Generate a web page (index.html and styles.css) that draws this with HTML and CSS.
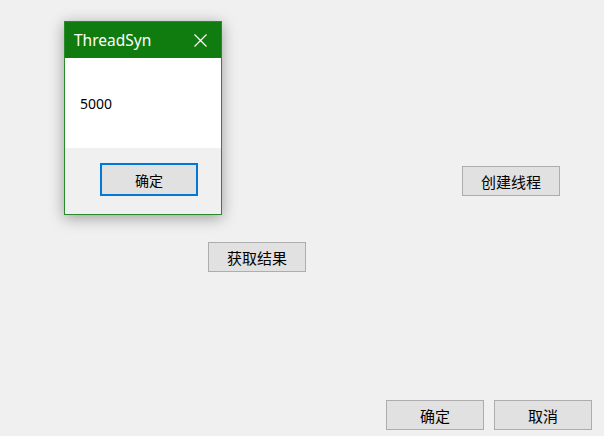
FILE: index.html
```html
<!DOCTYPE html>
<html lang="zh-CN">
<head>
  <meta charset="UTF-8">
  <title>ThreadSyn</title>
  <link rel="stylesheet" href="styles.css">
</head>
<body>
  <div class="form">
    <div class="row row-create">
      <button class="btn">创建线程</button>
    </div>
    <div class="row row-result">
      <button class="btn">获取结果</button>
    </div>
    <div class="footer">
      <button class="btn">确定</button>
      <button class="btn">取消</button>
    </div>
  </div>

  <div class="msgbox">
    <div class="msgbox-title">
      <span>ThreadSyn</span>
      <svg class="close" width="13" height="13" viewBox="0 0 13 13">
        <path d="M0.5 0.5 L12.5 12.5 M12.5 0.5 L0.5 12.5" stroke="#fff" stroke-width="1.2" fill="none"/>
      </svg>
    </div>
    <div class="msgbox-body">5000</div>
    <div class="msgbox-foot">
      <button class="btn btn-default">确定</button>
    </div>
  </div>
</body>
</html>
```

FILE: styles.css
```css
html, body {
  margin: 0;
  padding: 0;
}
body {
  width: 604px;
  height: 436px;
  background-color: #f0f0f0;
  font-family: "Noto Sans", "Noto Sans CJK SC", sans-serif;
  color: #000;
  position: relative;
  overflow: hidden;
}
.form {
  height: 436px;
  display: flex;
  flex-direction: column;
}
.row {
  display: flex;
}
.row-create {
  margin-top: 166px;
  padding-left: 462px;
}
.row-result {
  margin-top: 46px;
  padding-left: 208px;
}
.footer {
  margin-top: auto;
  display: flex;
  justify-content: flex-end;
  gap: 10px;
  padding: 0 12px 6px 0;
}
.btn {
  width: 98px;
  height: 30px;
  background-color: #e1e1e1;
  border: 1px solid #adadad;
  font-family: "Noto Sans CJK SC", sans-serif;
  font-size: 15px;
  color: #000;
  padding: 0;
  margin: 0;
}

.msgbox {
  position: absolute;
  left: 64px;
  top: 21px;
  width: 156px;
  height: 192px;
  border: 1px solid #2b8a2b;
  background-color: #f0f0f0;
  box-shadow: 0 3px 14px rgba(0, 0, 0, 0.35);
  display: flex;
  flex-direction: column;
}
.msgbox-title {
  height: 36px;
  background-color: #107c10;
  color: #fff;
  display: flex;
  align-items: center;
  justify-content: space-between;
  padding: 0 14px 0 9px;
  font-size: 15.5px;
}
.msgbox-body {
  height: 90px;
  background-color: #fff;
  display: flex;
  align-items: center;
  padding-left: 15px;
  font-size: 14px;
}
.msgbox-foot {
  flex: 1;
  display: flex;
  padding: 15px 0 0 35px;
}
.btn-default {
  height: 33px;
  border: 2px solid #0078d7;
  font-size: 14px;
}
```
